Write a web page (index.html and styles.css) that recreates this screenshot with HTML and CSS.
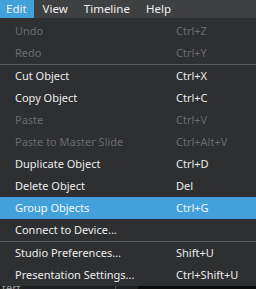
FILE: index.html
```html
<!DOCTYPE html>
<html>
<head>
<meta charset="utf-8">
<link rel="stylesheet" href="styles.css">
</head>
<body>
<div class="menubar">
  <span class="mb-item active">Edit</span>
  <span class="mb-item">View</span>
  <span class="mb-item">Timeline</span>
  <span class="mb-item">Help</span>
</div>
<div class="dropdown">
  <div class="row disabled"><span class="label">Undo</span><span class="key">Ctrl+Z</span></div>
  <div class="row disabled"><span class="label">Redo</span><span class="key">Ctrl+Y</span></div>
  <div class="sep"></div>
  <div class="row"><span class="label">Cut Object</span><span class="key">Ctrl+X</span></div>
  <div class="row"><span class="label">Copy Object</span><span class="key">Ctrl+C</span></div>
  <div class="row disabled"><span class="label">Paste</span><span class="key">Ctrl+V</span></div>
  <div class="row disabled"><span class="label">Paste to Master Slide</span><span class="key">Ctrl+Alt+V</span></div>
  <div class="row"><span class="label">Duplicate Object</span><span class="key">Ctrl+D</span></div>
  <div class="row"><span class="label">Delete Object</span><span class="key">Del</span></div>
  <div class="row hover"><span class="label">Group Objects</span><span class="key">Ctrl+G</span></div>
  <div class="row"><span class="label">Connect to Device...</span><span class="key"></span></div>
  <div class="sep"></div>
  <div class="row"><span class="label">Studio Preferences...</span><span class="key">Shift+U</span></div>
  <div class="row"><span class="label">Presentation Settings...</span><span class="key">Ctrl+Shift+U</span></div>
</div>
<div class="under">
  <span class="under-text">tert</span>
  <span class="under-line"></span>
  <span class="under-dark"></span>
</div>
</body>
</html>
```
FILE: styles.css
```css
html, body {
  margin: 0;
  padding: 0;
  background: #2e2f31;
  font-family: "Noto Sans", "Open Sans", sans-serif;
  font-size: 11px;
  overflow: hidden;
}
.menubar {
  display: flex;
  gap: 3px;
  height: 18px;
  background: #3f4042;
  color: #f0f0f0;
  font-size: 11.5px;
}
.mb-item {
  line-height: 18px;
  padding: 0 7px 0 6px;
}
.mb-item.active {
  background: #42a0db;
}
.dropdown {
  background: #2e2f31;
  padding-top: 2px;
}
.row {
  display: flex;
  height: 22px;
  line-height: 22px;
  color: #ececec;
  padding-left: 15px;
}
.row .label {
  width: 161px;
  white-space: nowrap;
}
.row .key {
  white-space: nowrap;
}
.row.disabled {
  color: #6a6b6d;
}
.row.hover {
  background: #42a0db;
  color: #f4f8fb;
}
.sep {
  height: 1px;
  background: #5c5d5f;
}
.under {
  display: flex;
  height: 3px;
  background: #1f2022;
  align-items: flex-start;
  overflow: hidden;
}
.under-text {
  color: #9a9a9a;
  font-size: 11px;
  line-height: 3px;
  width: 113px;
  padding-left: 2px;
}
.under-line {
  width: 1px;
  height: 3px;
  background: #4a4b4d;
}
.under-dark {
  margin-left: 22px;
  flex: 1;
  height: 3px;
  background: #0c0c0c;
}
```
